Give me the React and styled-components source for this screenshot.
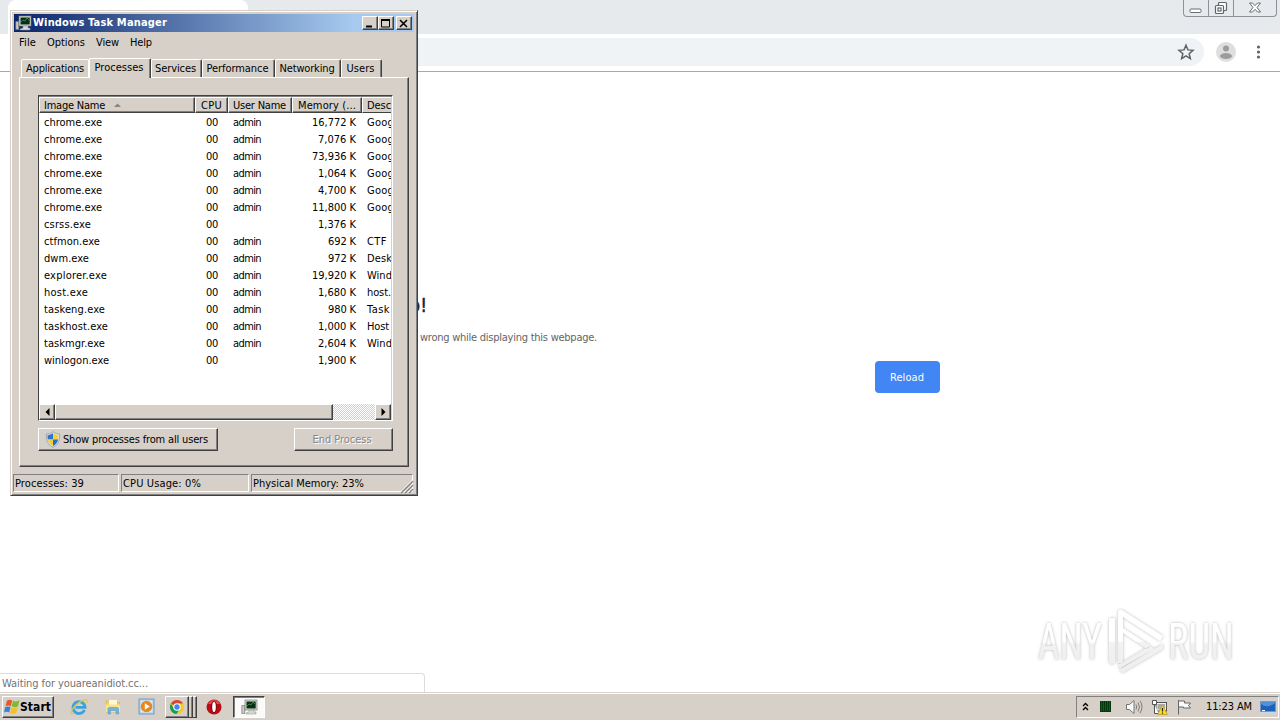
import React, { useLayoutEffect, useRef } from "react";
import styled, { createGlobalStyle, css } from "styled-components";

const face = "#d6d0c9";
const dark = "#404040";
const shade = "#808080";

const GlobalStyle = createGlobalStyle`
  * { box-sizing: border-box; }
  html, body { margin: 0; padding: 0; overflow: hidden; }
  body {
    font-family: "DejaVu Sans Condensed", "DejaVu Sans", sans-serif;
    font-stretch: condensed;
    font-size: 11px;
    line-height: 14px;
    color: #000;
  }
  svg { display: block; flex: none; overflow: visible; }
`;

const raised = css`
  border: 1px solid;
  border-color: #fff ${dark} ${dark} #fff;
  box-shadow: inset -1px -1px 0 ${shade};
`;

const TextBox = styled.span`
  display: inline-block;
  white-space: pre;
  flex: none;
`;

/* Label spaced out to the advance width its GUI font would have. */
function Label({ w, children }) {
  const ref = useRef(null);
  useLayoutEffect(() => {
    const el = ref.current;
    if (!w) return;
    el.style.letterSpacing = "0px";
    const natural = el.getBoundingClientRect().width;
    el.style.letterSpacing = `${(w - natural) / Math.max(1, el.textContent.length)}px`;
  }, [w, children]);
  return <TextBox ref={ref}>{children}</TextBox>;
}

const Desktop = styled.div`
  position: relative;
  width: 1280px;
  height: 720px;
  display: flex;
  flex-direction: column;
  background: #fff;
  overflow: hidden;
`;

/* ---------- browser ---------- */
const TabStrip = styled.div`
  height: 34px;
  flex: none;
  background: #e7eaed;
  display: flex;
  justify-content: space-between;
  align-items: flex-start;
  padding-left: 8px;
`;
const BrowserTab = styled.div`
  width: 240px;
  height: 34px;
  background: #fff;
  border-radius: 8px 8px 0 0;
`;
const Caption = styled.div`
  display: flex;
  width: 94px;
  height: 17px;
  margin-right: 3px;
  border: 1px solid #8d9298;
  border-top: 0;
  border-radius: 0 0 4px 4px;
`;
const CaptionCell = styled.div`
  width: ${(p) => p.$w}px;
  display: flex;
  justify-content: center;
  padding-top: 1px;
  & + & { border-left: 1px solid #8d9298; }
`;
const Toolbar = styled.div`
  height: 38px;
  flex: none;
  display: flex;
  align-items: center;
  padding: 0 14px 1px 100px;
  border-bottom: 1px solid #a9a9a9;
`;
const Omnibox = styled.div`
  flex: 1;
  height: 28px;
  margin-right: 12px;
  border-radius: 14px;
  background: #f0f3f5;
  display: flex;
  align-items: center;
  justify-content: flex-end;
  padding-right: 9px;
`;
const ToolIcons = styled.div`
  display: flex;
  gap: 14px;
`;
const Page = styled.main`
  flex: 1;
  display: flex;
  flex-direction: column;
  justify-content: space-between;
`;
const ErrorBlock = styled.section`
  width: 600px;
  margin: 222px 0 0 340px;
  display: flex;
  flex-direction: column;
`;
const ErrorTitle = styled.h1`
  margin: 0;
  width: 87px;
  text-align: right;
  font: 400 19px/22px "DejaVu Sans Condensed", "DejaVu Sans", sans-serif;
  color: #202124;
  -webkit-text-stroke: 0.4px #202124;
`;
const ErrorText = styled.p`
  margin: 15px 0 0;
  width: 257px;
  text-align: right;
  color: #646464;
`;
const Reload = styled.button`
  align-self: flex-end;
  width: 65px;
  height: 32px;
  margin-top: 16px;
  padding: 1px 1px 0 0;
  border: 0;
  border-radius: 4px;
  background: #4285f4;
  color: #fff;
  font: inherit;
`;
const PageFoot = styled.div`
  display: flex;
  justify-content: space-between;
  align-items: flex-end;
  height: 89px;
  padding-right: 30px;
`;
const StatusBubble = styled.div`
  width: 425px;
  height: 19px;
  padding: 3px 2px 0;
  border: 1px solid #dcdcdc;
  border-left: 0;
  border-bottom: 0;
  border-radius: 0 4px 0 0;
  color: #737373;
`;
const Watermark = styled.div`
  align-self: flex-start;
`;

/* ---------- task manager ---------- */
const Window = styled.div`
  position: absolute;
  left: 10px;
  top: 10px;
  width: 408px;
  height: 486px;
  padding: 2px 2px 2px 2px;
  background: ${face};
  border: 1px solid;
  border-color: ${face} ${dark} ${dark} ${face};
  box-shadow: inset 1px 1px 0 #fff, inset -1px -1px 0 ${shade};
  display: flex;
  flex-direction: column;
`;
const TitleBar = styled.header`
  height: 18px;
  margin: 1px 1px 0;
  flex: none;
  display: flex;
  align-items: center;
  padding: 0 2px 0 1px;
  color: #fff;
  font: bold 11px/18px "DejaVu Sans Condensed", "DejaVu Sans", sans-serif;
  background: linear-gradient(90deg, #0a246a, #a6caf0 85%);
`;
const TitleText = styled.div`
  flex: 1;
  padding-left: 1px;
`;
const SysButton = styled.div`
  width: 16px;
  height: 14px;
  background: ${face};
  ${raised}
  margin-left: ${(p) => p.$gap || 0}px;
  display: flex;
  align-items: center;
  justify-content: center;
`;
const MenuBar = styled.nav`
  height: 20px;
  flex: none;
  display: flex;
  padding: 4px 0 0 6px;
`;
const MenuItem = styled.span`
  width: ${(p) => p.$w}px;
`;
const Tabs = styled.div`
  height: 25px;
  flex: none;
  display: flex;
  align-items: flex-end;
  padding: 0 0 0 8px;
`;
const Tab = styled.div`
  width: ${(p) => p.$w}px;
  height: ${(p) => (p.$active ? 20 : 18)}px;
  margin-bottom: ${(p) => (p.$active ? -1 : 0)}px;
  padding: 2px ${(p) => (p.$first ? 0 : 2)}px 0 0;
  display: flex;
  justify-content: center;
  background: ${face};
  border: 1px solid #fff;
  border-bottom: 0;
  border-right-color: ${(p) => (p.$first ? "#fff" : dark)};
  border-radius: 2px 2px 0 0;
  box-shadow: ${(p) => (p.$first ? "none" : `inset -1px 0 0 ${shade}`)};
  position: relative;
  z-index: ${(p) => (p.$active ? 1 : 0)};
`;
const Panel = styled.section`
  width: 390px;
  height: 390px;
  margin-left: 6px;
  padding: 17px 14px 0 18px;
  ${raised}
`;
const List = styled.div`
  width: 355px;
  height: 326px;
  background: #fff;
  border: 1px solid;
  border-color: ${dark} #fff #fff ${dark};
  padding: 1px 1px 0 0;
  box-shadow: inset 0 1px 0 ${shade}, inset -1px 0 0 ${face};
  display: flex;
  flex-direction: column;
`;
const grid = css`
  display: grid;
  grid-template-columns: 156px 33px 64px 70px 29px;
  overflow: hidden;
`;
const HeaderRow = styled.div`
  ${grid}
  height: 16px;
  flex: none;
`;
const HeaderCell = styled.div`
  height: 16px;
  padding: 1px 0 0 ${(p) => p.$l ?? 4}px;
  background: ${face};
  display: flex;
  overflow: hidden;
  white-space: nowrap;
  ${(p) => (p.$last ? css`border-top: 1px solid #fff; border-left: 1px solid #fff; border-bottom: 1px solid ${dark};` : raised)}
`;
const Rows = styled.div`
  flex: 1;
  padding-top: 1px;
`;
const Row = styled.div`
  ${grid}
  height: 17px;
`;
const Cell = styled.div`
  padding: 2px ${(p) => p.$r || 0}px 0 ${(p) => p.$l || 0}px;
  text-align: ${(p) => (p.$end ? "right" : "left")};
  overflow: hidden;
  white-space: nowrap;
`;
const ScrollBar = styled.div`
  height: 16px;
  flex: none;
  display: flex;
  background: repeating-conic-gradient(#fff 0 25%, ${face} 0 50%) 0 0 / 2px 2px;
`;
const ScrollButton = styled.div`
  width: 16px;
  flex: none;
  background: ${face};
  ${raised}
  display: flex;
  align-items: center;
  justify-content: center;
`;
const Thumb = styled.div`
  width: 278px;
  margin-right: auto;
  background: ${face};
  ${raised}
`;
const Actions = styled.div`
  display: flex;
  justify-content: space-between;
  margin-top: 7px;
  width: 355px;
`;
const Button = styled.button`
  width: ${(p) => p.$w}px;
  height: 23px;
  padding: 0 3px 0 0;
  background: ${face};
  ${raised}
  font: inherit;
  color: ${(p) => (p.$disabled ? "#8b8680" : "#000")};
  text-shadow: ${(p) => (p.$disabled ? "1px 1px 0 #fff" : "none")};
  display: flex;
  align-items: center;
  justify-content: center;
  gap: 2px;
`;
const StatusBar = styled.footer`
  display: flex;
  gap: 2px;
  height: 19px;
  margin-top: 7px;
  position: relative;
`;
const StatusCell = styled.div`
  width: ${(p) => p.$w}px;
  height: 18px;
  padding: 2px 0 0 1px;
  border: 1px solid;
  border-color: ${shade} #fff #fff ${shade};
`;
const Grip = styled.div`
  position: absolute;
  right: 2px;
  bottom: 0;
`;

/* ---------- taskbar ---------- */
const Taskbar = styled.div`
  height: 28px;
  flex: none;
  display: flex;
  align-items: center;
  background: ${face};
  border-top: 1px solid #d8d4cd;
  box-shadow: inset 0 1px 0 #fff;
  padding: 2px 1px 2px 2px;
`;
const StartButton = styled.div`
  width: 52px;
  height: 22px;
  ${raised}
  display: flex;
  align-items: center;
  padding-left: 1px;
  font-weight: bold;
  font-size: 12px;
`;
const Launch = styled.div`
  width: ${(p) => p.$w}px;
  margin-left: ${(p) => p.$ml || 0}px;
  height: 22px;
  display: flex;
  align-items: center;
  justify-content: center;
`;
const StackButton = styled(Launch)`
  ${raised}
`;
const StackEdge = styled.div`
  width: 4px;
  height: 22px;
  border-top: 1px solid #fff;
  border-right: 1px solid ${dark};
  border-bottom: 1px solid ${dark};
  box-shadow: inset -1px 0 0 ${shade};
`;
const PressedButton = styled(Launch)`
  background: #fbfaf9;
  border: 1px solid;
  border-color: ${dark} #fff #fff ${dark};
  box-shadow: inset 1px 1px 0 ${shade};
`;
const Tray = styled.div`
  width: 203px;
  height: 22px;
  margin-left: auto;
  display: flex;
  align-items: center;
  justify-content: space-between;
  padding: 0 2px 0 5px;
  border: 1px solid;
  border-color: ${shade} #fff #fff ${shade};
`;
const TrayIcons = styled.div`
  display: flex;
  align-items: center;
  gap: ${(p) => p.$gap}px;
`;

const MonitorIcon = () => (
  <svg width="17" height="16" viewBox="0 0 17 16">
    <path d="M.8 6.500h3v8h-3z" fill="#c9cac5" stroke="#777b75" strokeWidth=".7" />
    <rect x="4" y="1" width="12" height="10" fill="#dcded8" stroke="#70756f" strokeWidth=".7" />
    <rect x="5.500" y="2.500" width="9.200" height="7" fill="#092d16" />
    <path d="M6 7l2-2 2 1 2-3 2 2" fill="none" stroke="#2f8a3c" />
    <path d="M8 11h5v2h2v2H5v-1l3-1z" fill="#d6d8d3" stroke="#8a8e88" strokeWidth=".5" />
  </svg>
);
const ShieldIcon = () => (
  <svg width="16" height="17" viewBox="0 0 16 17">
    <path d="M8 .7C6 2.300 3.500 3 1.300 3c0 6 .8 10.300 6.700 13.300C13.900 13.300 14.700 9 14.700 3 12.500 3 10 2.300 8 .7z" fill="#dce5ea" stroke="#8b9cab" strokeWidth=".8" />
    <path d="M8 2.300C6.200 3.600 4.500 4 2.500 4.200c0 1.500.1 3 .4 4.300H8z" fill="#2f72cf" />
    <path d="M8 2.300c1.800 1.300 3.500 1.700 5.500 1.900 0 1.500-.1 3-.4 4.300H8z" fill="#f5d535" />
    <path d="M2.900 8.500C3.600 11.500 5 13.500 8 15V8.500z" fill="#f2cf2b" />
    <path d="M13.100 8.500C12.400 11.500 11 13.500 8 15V8.500z" fill="#286bc8" />
  </svg>
);
const WindowsFlag = () => (
  <svg width="16" height="16" viewBox="0 0 16 16">
    <path d="M3 1.500C5 .5 6.500.5 8.200 1.500L6.900 7C5 6.200 3.400 6.200 1.500 7z" fill="#e8582a" />
    <path d="M9 1.800c2 1 3.700 1 6.500-.5L14 7.300c-2.300 1.200-4.300 1.200-6.300 0z" fill="#7dba31" />
    <path d="M1.200 8C3 7.200 4.800 7.200 6.600 8L5.200 13.500c-1.800-1-3.400-1-5.200 0z" fill="#3c82d2" />
    <path d="M7.400 8.500c1.800 1 3.800 1 6.300 0l-1.500 5.500c-2.300 1.200-4.200 1.100-6.100 0z" fill="#f6bf24" />
  </svg>
);
const IEIcon = () => (
  <svg width="18" height="18" viewBox="0 0 18 18">
    <path d="M14.500 12A6 6 0 1 1 15 9.300H5.500" fill="none" stroke="#39a3dd" strokeWidth="2.800" />
    <path d="M4 14.800C-.5 18 .6 12.500 5 8c4.500-4.700 10.800-8 12-5.500.4.900 0 1.800-.5 2.600" fill="none" stroke="#e9c24f" strokeWidth="1.300" />
  </svg>
);
const FolderIcon = () => (
  <svg width="18" height="18" viewBox="0 0 18 18">
    <path d="M2 3h5l1 1.500h7.500V14H2z" fill="#f0cf65" stroke="#d2ae45" strokeWidth=".6" />
    <path d="M5 2h8v5H5z" fill="#fff8d8" />
    <path d="M1.500 6.500h14.500V14H1.500z" fill="#f8e28b" />
    <path d="M4 16v-5q0-1.500 1.500-1.500h7.500q1.500 0 1.500 1.500v5h-2.500v-3.500H6.500V16z" fill="#70b5dd" stroke="#4a94c4" strokeWidth=".5" />
  </svg>
);
const PlayerIcon = () => (
  <svg width="17" height="17" viewBox="0 0 17 17">
    <rect x="1" y="1" width="15" height="15" fill="#a9cdea" stroke="#6d9fc9" />
    <rect x="2.500" y="2.500" width="12" height="12" fill="#d9e9f5" />
    <circle cx="8.500" cy="8.500" r="5.800" fill="#ed861c" />
    <path d="M6.800 5.300v6.400l5-3.200z" fill="#fff" />
  </svg>
);
const ChromeIcon = () => (
  <svg width="16" height="16" viewBox="0 0 16 16">
    <circle cx="8" cy="8" r="7" fill="#f6c926" />
    <path d="M8 8L1.900 4.500A7 7 0 0 1 14.100 4.500H8z" fill="#db4437" />
    <path d="M8 8L5 10 1.900 4.500A7 7 0 0 0 7.500 15L11 9.500z" fill="#189d58" />
    <circle cx="8" cy="8" r="3.700" fill="#fff" />
    <circle cx="8" cy="8" r="2.700" fill="#4285f4" />
  </svg>
);
const OperaIcon = () => (
  <svg width="16" height="16" viewBox="0 0 16 16">
    <circle cx="8" cy="8" r="7.500" fill="#b90d16" />
    <path d="M2 5a6.500 6.500 0 0 1 12 0z" fill="#df4b4b" />
    <ellipse cx="8" cy="8" rx="3.200" ry="6" fill="#8a0810" />
    <ellipse cx="8" cy="8" rx="1.800" ry="5" fill="#fff" />
  </svg>
);
const SpeakerIcon = () => (
  <svg width="18" height="16" viewBox="0 0 18 16" fill="none" stroke="#747474">
    <path d="M1.500 5.500h3L9 1.500v13L4.500 10.500h-3z" fill="#fafafa" />
    <path d="M11 5.500q1.500 2.500 0 5M13 3.500q3 4.500 0 9M15 1.800q4 6 0 12.400" strokeWidth=".9" />
  </svg>
);
const NetworkIcon = () => (
  <svg width="17" height="16" viewBox="0 0 17 16">
    <rect x="5" y="3.500" width="10.500" height="8.500" fill="#eee" stroke="#555" />
    <rect x="6.500" y="5" width="7.500" height="5.500" fill="#aaa" />
    <path d="M1.500 1.500h4v4h-4zM3.500 5.500v9h4" fill="#fff" stroke="#555" />
    <path d="M11.500 6l4.800 9.500H6.700z" fill="#ffdb24" stroke="#b9971c" strokeWidth=".7" />
    <path d="M11.500 9v3.500m0 .9v1.300" stroke="#222" strokeWidth="1.200" />
  </svg>
);
const FlagIcon = () => (
  <svg width="16" height="16" viewBox="0 0 16 16">
    <path d="M2.500 1v14.500M2.500 2h6v2h6l-2 2.500 2 2.500h-7V8h-5" fill="#fafafa" stroke="#666" />
  </svg>
);
const DesktopIcon = () => (
  <svg width="16" height="16" viewBox="0 0 16 16">
    <path d="M.5 2.500h15v10H.5z" fill="#1d62b8" stroke="#7598c4" />
    <path d="M1 12V5q6 5 14-1v-1H1z" fill="#4f91da" />
    <path d="M0 13h16v1.500H0z" fill="#c9d8e8" /><path d="M2 11.500h3" stroke="#fff" />
  </svg>
);

const processes = [
  ["chrome.exe", 58, "admin", "16,772 K", 44, "Goog", 27],
  ["chrome.exe", 58, "admin", "7,076 K", 38, "Goog", 27],
  ["chrome.exe", 58, "admin", "73,936 K", 44, "Goog", 27],
  ["chrome.exe", 58, "admin", "1,064 K", 38, "Goog", 27],
  ["chrome.exe", 58, "admin", "4,700 K", 38, "Goog", 27],
  ["chrome.exe", 58, "admin", "11,800 K", 44, "Goog", 27],
  ["csrss.exe", 47, "", "1,376 K", 38, "", 0],
  ["ctfmon.exe", 56, "admin", "692 K", 28, "CTF I", 27],
  ["dwm.exe", 45, "admin", "972 K", 28, "Desk", 25],
  ["explorer.exe", 63, "admin", "19,920 K", 44, "Wind", 25],
  ["host.exe", 44, "admin", "1,680 K", 38, "host.", 24],
  ["taskeng.exe", 61, "admin", "980 K", 28, "Task", 23],
  ["taskhost.exe", 64, "admin", "1,000 K", 38, "Host", 22],
  ["taskmgr.exe", 61, "admin", "2,604 K", 38, "Wind", 25],
  ["winlogon.exe", 65, "", "1,900 K", 38, "", 0],
];
const tabs = [
  ["Applications", 68, 58], ["Processes", 62, 49], ["Services", 51, 41],
  ["Performance", 73, 62], ["Networking", 66, 55], ["Users", 41, 28],
];

function TaskManager() {
  return (
    <Window>
      <TitleBar>
        <MonitorIcon />
        <TitleText><Label w={134}>Windows Task Manager</Label></TitleText>
        <SysButton><svg width="10" height="9"><path d="M1 7.500h6" stroke="#000" strokeWidth="2" /></svg></SysButton>
        <SysButton><svg width="10" height="9"><path d="M.5 1h8M.5 1v7h8V1" fill="none" stroke="#000" /><path d="M0 1h9" stroke="#000" strokeWidth="2" /></svg></SysButton>
        <SysButton $gap={2}><svg width="10" height="9"><path d="M1 1l7 7M8 1L1 8" stroke="#000" strokeWidth="1.600" /></svg></SysButton>
      </TitleBar>
      <MenuBar>
        <MenuItem $w={28}><Label w={17}>File</Label></MenuItem>
        <MenuItem $w={49}><Label w={38}>Options</Label></MenuItem>
        <MenuItem $w={34}><Label w={23}>View</Label></MenuItem>
        <MenuItem $w={30}><Label w={22}>Help</Label></MenuItem>
      </MenuBar>
      <Tabs>
        {tabs.map(([name, w, tw], i) => (
          <Tab key={name} $w={w} $active={i === 1} $first={i === 0}><Label w={tw}>{name}</Label></Tab>
        ))}
      </Tabs>
      <Panel>
        <List>
          <HeaderRow>
            <HeaderCell>
              <Label w={61}>Image Name</Label>
              <svg width="24" height="12"><path d="M9 8h7l-3.500-3.500z" fill="#858585" /></svg>
            </HeaderCell>
            <HeaderCell $l={5}><Label w={21}>CPU</Label></HeaderCell>
            <HeaderCell><Label w={53}>User Name</Label></HeaderCell>
            <HeaderCell $l={5}><Label w={58}>Memory (...</Label></HeaderCell>
            <HeaderCell $last><Label w={24}>Desc</Label></HeaderCell>
          </HeaderRow>
          <Rows>
            {processes.map(([name, nw, user, mem, mw, desc, dw], i) => (
              <Row key={i}>
                <Cell $l={5}><Label w={nw}>{name}</Label></Cell>
                <Cell $end $r={10}><Label w={12}>00</Label></Cell>
                <Cell $l={5}>{user && <Label w={28}>{user}</Label>}</Cell>
                <Cell $end $r={6}><Label w={mw}>{mem}</Label></Cell>
                <Cell $l={5}>{desc && <Label w={dw}>{desc}</Label>}</Cell>
              </Row>
            ))}
          </Rows>
          <ScrollBar>
            <ScrollButton><svg width="5" height="8"><path d="M4.500 0v8L.5 4z" /></svg></ScrollButton>
            <Thumb />
            <ScrollButton><svg width="5" height="8"><path d="M.5 0v8l4-4z" /></svg></ScrollButton>
          </ScrollBar>
        </List>
        <Actions>
          <Button $w={180}><ShieldIcon /><Label w={145}>Show processes from all users</Label></Button>
          <Button $w={99} $disabled><Label w={59}>End Process</Label></Button>
        </Actions>
      </Panel>
      <StatusBar>
        <StatusCell $w={106}><Label w={69}>Processes: 39</Label></StatusCell>
        <StatusCell $w={128}><Label w={78}>CPU Usage: 0%</Label></StatusCell>
        <StatusCell $w={162}><Label w={111}>Physical Memory: 23%</Label></StatusCell>
        <Grip>
          <svg width="13" height="13"><path d="M1 13L13 1M5 13l8-8M9 13l4-4" stroke="#808080" strokeWidth="1.500" /><path d="M0 12.500L12.500 0M4 12.500L12.500 4M8 12.500l4.500-4.500" stroke="#fff" strokeWidth=".8" /></svg>
        </Grip>
      </StatusBar>
    </Window>
  );
}

const brandText = {
  fontFamily: "Roboto, sans-serif",
  fontSize: 50,
  fontWeight: 400,
  lengthAdjust: "spacingAndGlyphs",
};

function Brand() {
  return (
    <svg width="212" height="76" viewBox="0 0 212 76">
      <defs>
        <filter id="soft" x="-10%" y="-10%" width="120%" height="120%">
          <feDropShadow dx="0" dy="0" stdDeviation="1.700" floodColor="#777" floodOpacity=".55" />
        </filter>
        <linearGradient id="fade" x1="0" x2="0" y1="0" y2="1">
          <stop offset="0" stopColor="#fff" /><stop offset=".5" stopColor="#fff" />
          <stop offset=".53" stopColor="#f2f2f2" /><stop offset="1" stopColor="#eee" />
        </linearGradient>
      </defs>
      <g filter="url(#soft)" fill="url(#fade)">
        <text x="0" y="56" textLength="64" {...brandText}>ANY</text>
        <text x="130" y="56" textLength="66" {...brandText}>RUN</text>
        <path fillRule="evenodd" d="M84 7l41 26-3 5-37-24v46h-5V9q1-3 4-2zM73 15h4v45l-3 1q-3 0-3-3V18q0-3 2-3zM85 25l28 18-4 3-24-16zM125 41v5L86 69q-3 1-4-2v-2zM112 43l4 3-33 20-3-4z" />
      </g>
    </svg>
  );
}

export default function App() {
  return (
    <Desktop>
      <GlobalStyle />
      <TabStrip>
        <BrowserTab />
        <Caption>
          <CaptionCell $w={24}><svg width="14" height="13"><rect x="1" y="8" width="11" height="3.500" rx="1" fill="#fff" stroke="#686e75" /></svg></CaptionCell>
          <CaptionCell $w={25}><svg width="14" height="14" fill="#fff" stroke="#5f656d" strokeWidth="1.200"><rect x="4.500" y="1.500" width="8" height="8" rx="1" /><rect x="1.500" y="4.500" width="8" height="8" rx="1" /><rect x="4" y="7" width="3" height="3" /></svg></CaptionCell>
          <CaptionCell $w={43}><svg width="14" height="14"><path d="M1.500 2h3L7 4.700 9.500 2h3L9 6.500l3.500 4.500h-3L7 8.300 4.500 11h-3L5 6.500z" fill="#fff" stroke="#686e75" /></svg></CaptionCell>
        </Caption>
      </TabStrip>
      <Toolbar>
        <Omnibox>
          <svg width="18" height="18" viewBox="0 0 24 24"><path d="M12 3l2.600 6.200 6.700.6-5.100 4.400 1.600 6.600L12 17.300l-5.800 3.500 1.600-6.600-5.100-4.400 6.700-.6z" fill="none" stroke="#5f6368" strokeWidth="2" /></svg>
        </Omnibox>
        <ToolIcons>
          <svg width="20" height="20"><circle cx="10" cy="10" r="10" fill="#dedede" /><circle cx="10" cy="6.500" r="3" fill="#9c9c9c" /><ellipse cx="10" cy="14" rx="6" ry="3" fill="#9c9c9c" /></svg>
          <svg width="16" height="20" fill="#5f6368"><circle cx="8.500" cy="5" r="1.600" /><circle cx="8.500" cy="10" r="1.600" /><circle cx="8.500" cy="15" r="1.600" /></svg>
        </ToolIcons>
      </Toolbar>
      <Page>
        <ErrorBlock>
          <ErrorTitle>p!</ErrorTitle>
          <ErrorText><Label w={177}>wrong while displaying this webpage.</Label></ErrorText>
          <Reload><Label w={34}>Reload</Label></Reload>
        </ErrorBlock>
        <PageFoot>
          <StatusBubble><Label w={146}>Waiting for youareanidiot.cc...</Label></StatusBubble>
          <Watermark><Brand /></Watermark>
        </PageFoot>
      </Page>
      <TaskManager />
      <Taskbar>
        <StartButton><WindowsFlag /><Label w={31}>Start</Label></StartButton>
        <Launch $w={18} $ml={16}><IEIcon /></Launch>
        <Launch $w={18} $ml={16}><FolderIcon /></Launch>
        <Launch $w={17} $ml={16}><PlayerIcon /></Launch>
        <StackButton $w={24} $ml={10}><ChromeIcon /></StackButton>
        <StackEdge /><StackEdge />
        <Launch $w={16} $ml={9}><OperaIcon /></Launch>
        <PressedButton $w={32} $ml={11}><MonitorIcon /></PressedButton>
        <Tray>
          <TrayIcons $gap={11}>
            <svg width="7" height="10"><path d="M1 4l2.500-2.500L6 4M1 8l2.500-2.500L6 8" fill="none" stroke="#000" strokeWidth="1.300" /></svg>
            <svg width="11" height="11"><rect width="11" height="11" fill="#00380b" /><path d="M1 1h9M1 3h9M1 5h9M1 7h9M1 9h9" stroke="#109022" strokeDasharray="1 1" /></svg>
          </TrayIcons>
          <TrayIcons $gap={8}><SpeakerIcon /><NetworkIcon /><FlagIcon /></TrayIcons>
          <TrayIcons $gap={8}><Label w={46}>11:23 AM</Label><DesktopIcon /></TrayIcons>
        </Tray>
      </Taskbar>
    </Desktop>
  );
}
